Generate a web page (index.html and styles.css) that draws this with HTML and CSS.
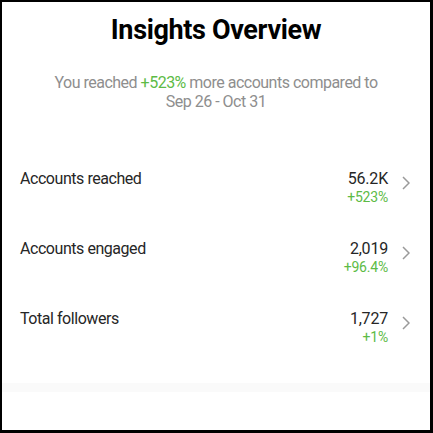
FILE: index.html
```html
<!DOCTYPE html>
<html>
<head>
<meta charset="utf-8">
<link rel="stylesheet" href="styles.css">
</head>
<body>
<div class="frame">
  <h1 class="title">Insights Overview</h1>
  <p class="subtitle">You reached <span class="green">+523%</span> more accounts compared to<br>Sep 26 - Oct 31</p>
  <div class="list">
    <div class="row">
      <div class="label">Accounts reached</div>
      <div class="stat">
        <div class="value">56.2K</div>
        <div class="delta">+523%</div>
      </div>
      <svg class="chev" width="8" height="14" viewBox="0 0 8 14"><path d="M1 1 L7 7 L1 13" fill="none" stroke="#9a9a9a" stroke-width="1.5"/></svg>
    </div>
    <div class="row">
      <div class="label">Accounts engaged</div>
      <div class="stat">
        <div class="value">2,019</div>
        <div class="delta">+96.4%</div>
      </div>
      <svg class="chev" width="8" height="14" viewBox="0 0 8 14"><path d="M1 1 L7 7 L1 13" fill="none" stroke="#9a9a9a" stroke-width="1.5"/></svg>
    </div>
    <div class="row">
      <div class="label">Total followers</div>
      <div class="stat">
        <div class="value">1,727</div>
        <div class="delta">+1%</div>
      </div>
      <svg class="chev" width="8" height="14" viewBox="0 0 8 14"><path d="M1 1 L7 7 L1 13" fill="none" stroke="#9a9a9a" stroke-width="1.5"/></svg>
    </div>
  </div>
  <div class="band"></div>
</div>
</body>
</html>
```
FILE: styles.css
```css
html, body {
  margin: 0;
  padding: 0;
  background: #fff;
}
.frame {
  box-sizing: border-box;
  width: 433px;
  height: 433px;
  border-style: solid;
  border-color: #000;
  border-width: 2px 3px 3px 2px;
  padding-top: 12px;
  font-family: Roboto, "Liberation Sans", sans-serif;
  color: #262626;
  display: flex;
  flex-direction: column;
}
.title {
  margin: 0;
  text-align: center;
  font-size: 27px;
  line-height: 32px;
  font-weight: 700;
  letter-spacing: -0.35px;
  color: #000;
}
.subtitle {
  margin: 27px 0 0;
  text-align: center;
  font-size: 16px;
  line-height: 19px;
  letter-spacing: -0.5px;
  color: #8e8e8e;
}
.green {
  color: #5dbb46;
}
.list {
  margin-top: 42px;
  display: flex;
  flex-direction: column;
}
.row {
  display: flex;
  align-items: center;
  padding: 17px 20px 17px 18px;
}
.label {
  flex: 1;
  align-self: flex-start;
  font-size: 16px;
  line-height: 18px;
  letter-spacing: -0.45px;
}
.stat {
  text-align: right;
}
.value {
  font-size: 16px;
  line-height: 18px;
  letter-spacing: -0.2px;
}
.delta {
  font-size: 14px;
  line-height: 18px;
  letter-spacing: -0.2px;
  color: #5dbb46;
}
.chev {
  margin-left: 14px;
  margin-top: -10px;
}
.band {
  margin-top: 20px;
  height: 9px;
  background: #fafafa;
}
```
